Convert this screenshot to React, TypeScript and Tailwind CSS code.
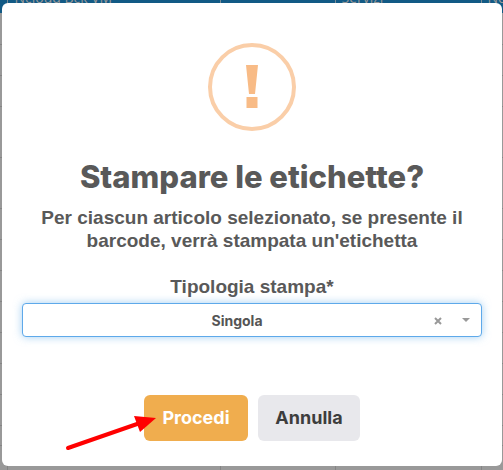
import { useState } from "react";

const rows = [31, 31, 31, 51, 51, 31, 31, 31, 31, 31, 31, 31, 20, 40];

function ArticlesTable() {
  return (
    <table className="-mt-[17px] w-full table-fixed border-collapse bg-[#999999] text-left font-['Open_Sans',sans-serif] text-sm leading-5">
      <colgroup>
        <col className="w-[7px]" />
        <col className="w-[213px]" />
        <col className="w-[115px]" />
        <col className="w-[146px]" />
        <col />
      </colgroup>
      <thead>
        <tr className="h-[30px] bg-[#125a85] text-[#999999]">
          <th className="border-r border-[#7b8c96]" />
          <th className="border-r border-[#7b8c96] pl-[7px] font-normal whitespace-nowrap">Ncloud Bck VM</th>
          <th className="border-r border-[#7b8c96] font-normal" />
          <th className="border-r border-[#7b8c96] pl-1.5 font-normal">Servizi</th>
          <th className="overflow-hidden pl-1.5 font-normal whitespace-nowrap">No</th>
        </tr>
      </thead>
      <tbody>
        {rows.map((height, i) => (
          <tr key={i} style={{ height }} className="border-b border-[#858585]">
            <td className="border-r border-[#858585]" />
            <td className="border-r border-[#858585]" />
            <td className="border-r border-[#858585]" />
            <td className="border-r border-[#858585]" />
            <td />
          </tr>
        ))}
      </tbody>
    </table>
  );
}

export default function App() {
  const [type, setType] = useState("Singola");

  return (
    <div className="relative h-screen overflow-hidden bg-[#999999] font-['Inter',sans-serif]">
      <ArticlesTable />
      <div className="absolute inset-0 flex items-start justify-center pt-[3px] pr-px pl-0.5">
        <section
          role="dialog"
          aria-labelledby="dialog-title"
          className="flex w-full max-w-[500px] flex-col items-center rounded-md bg-white px-5 pt-10 pb-[25px] text-center text-[#595959]"
        >
          <div className="flex size-[88px] items-center justify-center rounded-full border-4 border-[#facea8]">
            <svg viewBox="0 0 12 44" className="h-11 w-3 fill-[#f8bb86]" aria-hidden="true">
              <path d="M0 0h12L9 29H3zM.5 32h11v11H.5z" />
            </svg>
          </div>
          <h2 id="dialog-title" className="mt-7 text-[31px] leading-9 font-extrabold">
            Stampare le etichette?
          </h2>
          <p className="mt-[11px] font-['Liberation_Sans',Arial,sans-serif] text-[19px] leading-[23px] font-bold">
            Per ciascun articolo selezionato, se presente il barcode, verrà stampata un'etichetta
          </p>
          <label
            htmlFor="print-type"
            className="mt-[23px] font-['Liberation_Sans',Arial,sans-serif] text-[19px] leading-[23px] font-bold"
          >
            Tipologia stampa*
          </label>
          <div className="relative mt-[5px] w-full">
            <select
              id="print-type"
              value={type}
              onChange={(e) => setType(e.target.value)}
              className="h-[34px] w-full appearance-none rounded border border-[#5ea9ea] bg-white pr-[42px] pl-3 text-center text-[14px] font-bold text-[#555555] shadow-[0_0_8px_#66afe999] outline-none [text-align-last:center]"
            >
              <option value="" />
              <option>Singola</option>
              <option>Multipla</option>
            </select>
            <button
              type="button"
              aria-label="Rimuovi selezione"
              onClick={() => setType("")}
              className="absolute top-2.5 right-9 flex size-4 items-center justify-center"
            >
              <svg viewBox="0 0 8 8" className="size-2 stroke-[#999999] stroke-2" aria-hidden="true">
                <path d="M1 1l6 6M7 1L1 7" />
              </svg>
            </button>
            <svg
              viewBox="0 0 8 4"
              className="pointer-events-none absolute top-[15px] right-3 h-1 w-2 fill-[#999999]"
              aria-hidden="true"
            >
              <path d="M0 0h8L4 4z" />
            </svg>
          </div>
          <div className="mt-[58px] flex gap-2.5 text-[18px] leading-[22px] font-bold">
            <div className="relative">
              <button type="button" className="h-[46px] w-[104px] rounded-md bg-[#f0ad4e] text-white">
                Procedi
              </button>
              <svg
                viewBox="0 0 92 38"
                className="pointer-events-none absolute top-5 -left-20 h-[38px] w-[92px]"
                aria-hidden="true"
              >
                <path d="M4 33L76 8" stroke="#ff0000" strokeWidth="4" strokeLinecap="round" />
                <path d="M70 1l22 2-16 14z" fill="#ff0000" />
              </svg>
            </div>
            <button type="button" className="h-[46px] w-[102px] rounded-md bg-[#e8e8ec] text-[#3d3d3d]">
              Annulla
            </button>
          </div>
        </section>
      </div>
    </div>
  );
}
